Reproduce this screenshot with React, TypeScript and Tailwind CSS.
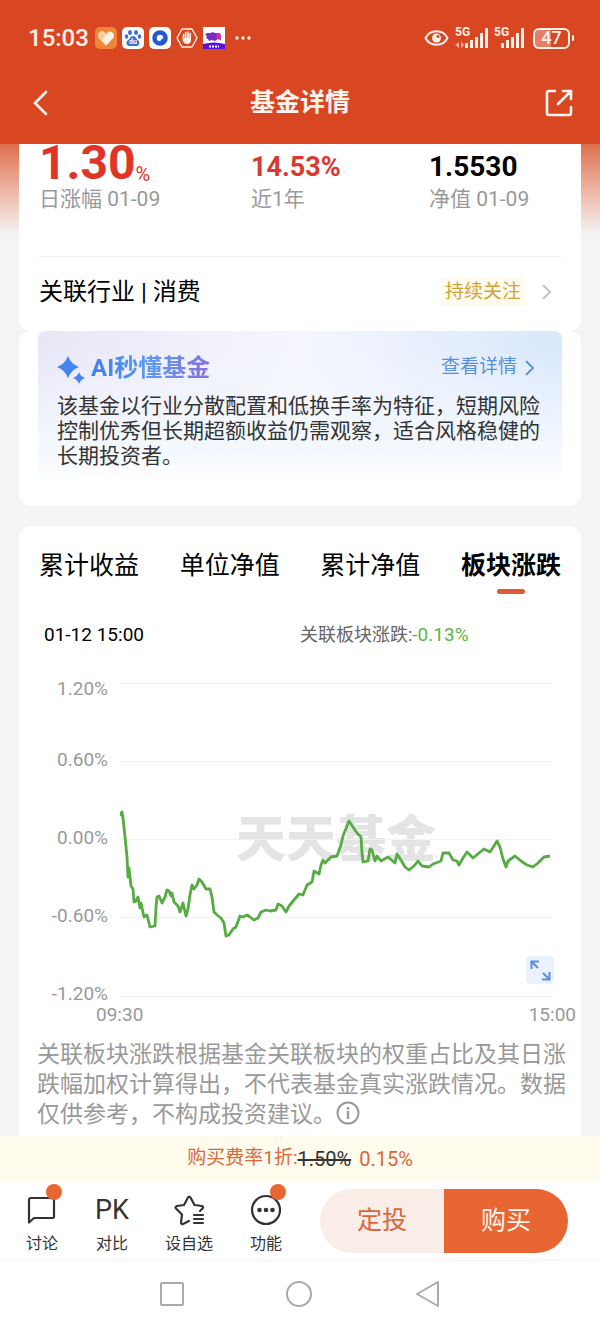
import React, { useState } from "react";

interface NavItem {
  label: string;
  icon: React.ReactNode;
  width: string;
  dot?: boolean;
}

const TABS = ["累计收益", "单位净值", "累计净值", "板块涨跌"];

const Y_LABELS = ["1.20%", "0.60%", "0.00%", "-0.60%", "-1.20%"];

const GRID_LINES = [0, 78, 156, 234, 313];

// 板块涨跌走势
const TREND =
  "0,133 1,130 2,129 3,135 5,154 7,174 8,194 9,185 11,203 13,206 14,219 16,218 18,214 20,225 21,220 24,234 27,232 30,244 35,243 36,224 37,214 39,213 42,220 45,214 47,207 49,208 51,213 52,210 54,219 58,223 60,229 63,220 66,233 68,226 70,212 72,202 74,206 77,202 79,196 82,199 86,206 90,206 92,214 94,229 97,232 101,235 104,240 106,253 109,252 113,246 116,244 120,233 123,234 127,232 130,234 134,237 138,235 141,229 146,227 150,228 156,227 158,221 162,223 166,229 169,223 174,217 179,211 183,212 187,202 192,199 194,188 199,191 201,182 203,177 205,180 211,174 217,173 221,162 223,153 227,143 229,138 233,144 237,150 241,154 242,170 243,179 248,178 250,166 252,167 255,178 257,173 261,178 268,174 275,180 277,171 281,177 285,184 289,187 294,183 298,178 302,183 309,184 313,181 321,178 323,170 329,170 333,177 337,178 339,182 343,175 347,169 353,175 359,170 364,166 370,169 374,163 377,158 380,164 383,176 386,184 388,178 395,173 401,178 407,182 413,184 418,180 424,174 430,173";

const Signal = ({ weak }: { weak?: boolean }) => (
  <svg width="33" height="22" viewBox="0 0 33 22" fill="#fff0e8" overflow="visible">
    <text x="0" y="9" fontSize="12" fontWeight="700" fontFamily="Roboto, sans-serif">5G</text>
    {weak && <path d="M0 18l4-3v6zM6 14l3 4-3 3z" opacity=".6" />}
    <rect x={weak ? 10 : 7} y="16" width="3" height="5" />
    <rect x={weak ? 15 : 12} y="13" width="3" height="8" />
    <rect x={weak ? 20 : 17} y="10" width="3" height="11" />
    <rect x={weak ? 25 : 22} y="6" width="3" height="15" />
    <rect x={weak ? 30 : 27} y="1" width="3" height="20" />
  </svg>
);

const StatusBar = () => (
  <div className="flex h-[76px] items-center justify-between pr-[26px] pl-7 text-[#fff0e8]">
    <div className="flex items-center gap-[5px]">
      <span className="mr-px text-2xl font-medium">15:03</span>
      <svg width="22" height="22" viewBox="0 0 22 22">
        <rect width="22" height="22" rx="5" fill="#f08438" />
        <path d="M11 18.500L4 11.500C1 8 5 2.500 9 5l2 2 2-2c4-2 8 3 5 6.500z" fill="#fff1df" />
        <path d="M11 7l-2-2C5 2.500 1 8 4 11.500l3 3z" fill="#ffcf9e" />
      </svg>
      <svg width="22" height="22" viewBox="0 0 22 22">
        <rect width="22" height="22" rx="5" fill="#fff" />
        <g fill="#3d6fd6">
          <ellipse cx="8" cy="5.500" rx="2" ry="2.600" />
          <ellipse cx="14" cy="5.500" rx="2" ry="2.600" />
          <ellipse cx="4.500" cy="9.500" rx="1.700" ry="2.200" />
          <ellipse cx="17.500" cy="9.500" rx="1.700" ry="2.200" />
          <path d="M11 9c3 0 3 3 5.500 4.500 2 2 .500 5.500-2 5.500h-7c-3 0-4-3.500-2-5.500C8 12 8 9 11 9z" />
        </g>
        <text x="7" y="17" fontSize="7" fontWeight="700" fontFamily="Roboto, sans-serif" fill="#fff">du</text>
      </svg>
      <svg width="22" height="22" viewBox="0 0 22 22">
        <rect width="22" height="22" rx="5" fill="#fff" />
        <circle cx="11" cy="11" r="5.500" fill="none" stroke="#2457d8" strokeWidth="4.500" />
        <path d="M11 14l3-3v3z" fill="#2457d8" />
      </svg>
      <svg width="22" height="22" viewBox="0 0 22 22" fill="none" stroke="#fff0e8">
        <path d="M6 2h10l5 9-5 9H6l-5-9z" strokeWidth="1.400" strokeLinejoin="round" />
        <path d="M7.500 7.500v6M9.700 5.500v6M12 5v6M14.200 6.500v7" strokeWidth="1.700" strokeLinecap="round" />
        <path d="M6.700 11h8.300v2c0 5-6 5-7.500 2z" fill="#fff0e8" stroke="none" />
      </svg>
      <svg width="22" height="22" viewBox="0 0 22 22">
        <rect width="22" height="22" fill="#fff" />
        <path d="M0 17Q11 14 22 17v5H0z" fill="#5712dd" />
        <path d="M4 6h4l1-1 3 1h5l1 4v3l-3-1-3 2-3-1-3 1-1-2-2-1 1-2-2-1z" fill="#7b28c9" />
        <path d="M14 6h3l1 5v2l-3-1-2-2z" fill="#d52ba6" />
        <path d="M6 19.500h10" stroke="#fff" strokeWidth="2" strokeDasharray="2 1" />
      </svg>
      <svg className="ml-1" width="18" height="6" viewBox="0 0 18 6" fill="#fff0e8">
        <circle cx="3" cy="3" r="1.700" />
        <circle cx="9" cy="3" r="1.700" />
        <circle cx="15" cy="3" r="1.700" />
      </svg>
    </div>
    <div className="flex items-center gap-1.5">
      <svg width="25" height="18" viewBox="0 0 25 18" fill="none" stroke="#fff0e8" strokeWidth="2">
        <path d="M1.500 9C6 0 19 0 23.500 9 19 18 6 18 1.500 9z" />
        <circle cx="12.500" cy="9" r="4.500" fill="#fff0e8" stroke="none" />
        <circle cx="14" cy="7.500" r="1.500" fill="#d84722" stroke="none" />
      </svg>
      <Signal weak />
      <Signal />
      <div className="flex items-center gap-0.5">
        <span className="flex h-[21px] w-[37px] items-center justify-center rounded-md border-2 border-[#fff0e8] bg-linear-to-r from-white/30 from-50% to-transparent to-50% text-lg leading-4 font-medium">
          47
        </span>
        <span className="h-1.5 w-0.5 rounded bg-[#fff0e8]" />
      </div>
    </div>
  </div>
);

const Stat = ({ className, label, children }: { className?: string; label: string; children: React.ReactNode }) => (
  <div className={className}>
    <div className="flex h-[46px] items-end text-[28px] leading-[38px] font-bold">{children}</div>
    <div className="text-[21px] leading-[26px] whitespace-nowrap text-[#999]">{label}</div>
  </div>
);

const Chart = () => (
  <div className="mt-[30px] mr-[29px] flex text-[#999]">
    <div className="w-[89px] shrink-0 text-right text-[19px] leading-5">
      {Y_LABELS.map((label, i) => (
        <div
          key={label}
          className={i === 0 ? "h-[71px]" : i === Y_LABELS.length - 1 ? "h-5" : "h-[78px]"}
        >
          {label}
        </div>
      ))}
    </div>
    <div className="relative ml-3 flex-1 pt-1">
      <div className="absolute top-[124px] left-[116px] font-['Noto_Sans_CJK_SC',sans-serif] text-[50px] leading-[64px] font-black whitespace-nowrap text-[#e4e4e4]">
        天天基金
      </div>
      <svg className="relative block h-[314px] w-full" viewBox="0 0 432 314" preserveAspectRatio="none">
        {GRID_LINES.map((y) => (
          <path key={y} d={`M0 ${y + 0.5}H432`} stroke="#f3f3f3" />
        ))}
        <polyline points={TREND} fill="none" stroke="#56ab42" strokeWidth="2.800" strokeLinejoin="round" />
      </svg>
      <button aria-label="全屏" className="absolute -right-0.5 bottom-[41px] rounded bg-[#e9f1fd]">
        <svg width="28" height="28" viewBox="0 0 28 28" fill="none" stroke="#5a8fdf" strokeWidth="2">
          <path d="M5.500 13V5.500H13M5.500 5.500L12 12M23.500 16v7.500H16M23.500 23.500L17 17" />
        </svg>
      </button>
      <div className="-mr-6 -ml-6 flex justify-between pt-2 text-[19px] leading-5">
        <span>09:30</span>
        <span>15:00</span>
      </div>
    </div>
  </div>
);

const NAV_ITEMS: NavItem[] = [
  {
    label: "讨论",
    width: "w-[70px]",
    dot: true,
    icon: (
      <svg width="32" height="32" viewBox="0 0 32 32" fill="none" stroke="#333" strokeWidth="2.200" strokeLinejoin="round">
        <path d="M5 4h21a2 2 0 0 1 2 2v17a1 1 0 0 1-1 1H8l-5 4.500V6a2 2 0 0 1 2-2z" />
      </svg>
    ),
  },
  {
    label: "对比",
    width: "w-[70px]",
    icon: <span className="text-[27px] leading-8">PK</span>,
  },
  {
    label: "设自选",
    width: "w-[84px]",
    icon: (
      <svg width="32" height="32" viewBox="0 0 32 32" fill="none" stroke="#333" strokeWidth="2.200" strokeLinejoin="round" strokeLinecap="round">
        <path d="M16 27l-6 3c-1 .500-2-.500-2-1.500l1-8-6-6c-1-1-.500-2 1-2.500l7-1 4-7.500c.700-1.300 1.800-1.300 2.500 0l4 7.500 7.500 1c1.300.300 1.500 1.500.500 2.500l-2.500 2.500" />
        <path d="M21 21h9M21 25h9M21 29h9" />
      </svg>
    ),
  },
  {
    label: "功能",
    width: "w-[70px]",
    dot: true,
    icon: (
      <svg width="32" height="32" viewBox="0 0 32 32" fill="none" stroke="#333" strokeWidth="2.200">
        <circle cx="16" cy="16" r="14" />
        <g fill="#333" stroke="none">
          <circle cx="9.500" cy="16" r="2.300" />
          <circle cx="16" cy="16" r="2.300" />
          <circle cx="22.500" cy="16" r="2.300" />
        </g>
      </svg>
    ),
  },
];

const App = () => {
  const [activeTab, setActiveTab] = useState(TABS[3]);

  return (
    <div className="flex min-h-screen flex-col bg-[#f4f4f4] font-[Roboto,'Noto_Sans_CJK_SC',sans-serif] text-black">
      <header className="bg-[#d84722] text-[#fff4ee]">
        <StatusBar />
        <div className="flex h-[54px] items-center justify-between pr-[26px] pl-7">
          <button aria-label="返回" className="w-7">
            <svg width="26" height="28" viewBox="0 0 26 28" fill="none" stroke="currentColor" strokeWidth="2.600" strokeLinecap="round">
              <path d="M18 3L7 14l11 11" />
            </svg>
          </button>
          <h1 className="text-[25px] font-bold">基金详情</h1>
          <button aria-label="分享">
            <svg width="30" height="30" viewBox="0 0 30 30" fill="none" stroke="currentColor" strokeWidth="2.600" strokeLinejoin="round" strokeLinecap="round">
              <path d="M11 3H5a2 2 0 0 0-2 2v20a2 2 0 0 0 2 2h20a2 2 0 0 0 2-2v-6M14 16L26 4M19 3h8v8" />
            </svg>
          </button>
        </div>
        <div className="h-3.5" />
      </header>

      <main className="flex-1 bg-linear-to-b from-[#dd6f4d] to-[#f4f4f4] to-[90px] px-[19px]">
        <section className="overflow-hidden rounded-b-xl bg-white px-5">
          <div className="-mt-1 flex border-b border-[#f2f2f2] pb-11">
            <Stat className="w-[212px]" label="日涨幅 01-09">
              <span className="text-5xl leading-[46px] text-[#e13426]">1.30</span>
              <span className="text-xl leading-6 font-normal text-[#e13426]">%</span>
            </Stat>
            <Stat className="w-[178px]" label="近1年">
              <span className="text-[27px] text-[#d93a30]">14.53%</span>
            </Stat>
            <Stat label="净值 01-09">1.5530</Stat>
          </div>
          <div className="flex h-[74px] items-center justify-between pr-2 pb-1">
            <h2 className="text-2xl">关联行业 | 消费</h2>
            <button className="flex items-center gap-4">
              <span className="bg-[#fffbee] px-1 text-[19px] leading-7 text-[#d0a33b]">持续关注</span>
              <svg width="12" height="18" viewBox="0 0 12 18" fill="none" stroke="#c8c8c8" strokeWidth="2.400">
                <path d="M2 2l7 7-7 7" />
              </svg>
            </button>
          </div>
        </section>

        <section className="rounded-xl bg-white px-[19px] pb-5">
          <div className="rounded-lg bg-[linear-gradient(to_bottom,transparent_10%,#f3f8ff_75%,#ffffff),linear-gradient(to_right,#e9e7f7,#f5f6fd_50%,#d9e8fc)] px-[19px] pt-5 pb-[17px]">
            <div className="flex h-[33px] items-center justify-between pr-2">
              <div className="flex items-center gap-1.5">
                <svg width="28" height="32" viewBox="0 0 28 32" fill="#4585f0">
                  <path d="M11 4q3 8 11 11-8 3-11 11-3-8-11-11 8-3 11-11z" />
                  <path d="M22 20q1.500 4.500 6 6-4.500 1.500-6 6-1.500-4.500-6-6 4.500-1.500 6-6z" />
                </svg>
                <h2 className="bg-linear-to-r from-[#3f7fee] via-[#5b98f2] to-[#8271dd] bg-clip-text text-2xl font-bold text-transparent">
                  AI秒懂基金
                </h2>
              </div>
              <a href="#detail" className="flex items-center gap-2 text-[19px] text-[#588fe0]">
                查看详情
                <svg width="10" height="16" viewBox="0 0 10 16" fill="none" stroke="currentColor" strokeWidth="1.800">
                  <path d="M1 1l7 7-7 7" />
                </svg>
              </a>
            </div>
            <p className="mt-2.5 -mr-1 text-[21px] leading-[25px] text-[#333]">
              该基金以行业分散配置和低换手率为特征，短期风险控制优秀但长期超额收益仍需观察，适合风格稳健的长期投资者。
            </p>
          </div>
        </section>

        <section className="mt-5 rounded-t-xl bg-white pt-5 pb-1.5">
          <div role="tablist" className="flex justify-between px-5">
            {TABS.map((tab) => (
              <button
                key={tab}
                role="tab"
                aria-selected={tab === activeTab}
                onClick={() => setActiveTab(tab)}
                className={`flex flex-col items-center text-[25px] leading-10 ${tab === activeTab ? "font-bold" : ""}`}
              >
                {tab}
                <span className={`mt-[3px] h-[5px] w-7 rounded ${tab === activeTab ? "bg-[#df5932]" : ""}`} />
              </button>
            ))}
          </div>
          <div className="mt-[27px] flex text-[19px] leading-7">
            <span className="w-1/2 pl-[25px]">01-12 15:00</span>
            <span className="text-[#5cb547]">
              <span className="text-lg leading-7 text-[#666]">关联板块涨跌:</span>-0.13%
            </span>
          </div>
          <Chart />
          <p className="mt-[15px] pr-3.5 pl-[18px] text-[23px] leading-[30px] text-[#999]">
            关联板块涨跌根据基金关联板块的权重占比及其日涨跌幅加权计算得出，不代表基金真实涨跌情况。数据仅供参考，不构成投资建议。
            <svg className="-mt-1.5 inline" width="24" height="24" viewBox="0 0 24 24" fill="none" stroke="#999" strokeWidth="2">
              <circle cx="12" cy="12" r="10.500" />
              <path d="M12 10v8M12 6v2.500" strokeWidth="2.400" />
            </svg>
          </p>
        </section>
      </main>

      <footer className="bg-white">
        <div className="flex h-[45px] items-center justify-center bg-[#fffbed] text-[19px] text-[#d8673a]">
          购买费率1折:
          <del className="mr-2 text-xl text-[#333]">1.50%</del>
          <span className="text-xl">0.15%</span>
        </div>
        <div className="flex h-20 items-center justify-between border-b border-[#f4f4f4] pr-8 pl-[7px]">
          <nav className="flex pt-2 text-[#333]">
            {NAV_ITEMS.map((item) => (
              <button key={item.label} className={`flex flex-col items-center gap-1.5 ${item.width}`}>
                <span className="relative h-8">
                  {item.icon}
                  {item.dot && <span className="absolute -top-2.5 -right-1 size-4 rounded-full bg-[#e86632]" />}
                </span>
                <span className="text-base leading-6">{item.label}</span>
              </button>
            ))}
          </nav>
          <div className="flex h-16 w-[248px] overflow-hidden rounded-full text-[25px]">
            <button className="flex-1 bg-[#faece7] text-[#d8673a]">定投</button>
            <button className="flex-1 bg-[#e86632] text-[#fff4ee]">购买</button>
          </div>
        </div>
        <div className="flex h-[65px] items-center justify-center gap-[102px]">
          <button aria-label="最近任务" className="size-6 rounded-xs border-2 border-[#aaa]" />
          <button aria-label="主页" className="size-[26px] rounded-full border-2 border-[#aaa]" />
          <button aria-label="后退">
            <svg width="26" height="28" viewBox="0 0 26 28" fill="none" stroke="#aaa" strokeWidth="2" strokeLinejoin="round">
              <path d="M24 2v24L3 14z" />
            </svg>
          </button>
        </div>
      </footer>
    </div>
  );
};

export default App;
